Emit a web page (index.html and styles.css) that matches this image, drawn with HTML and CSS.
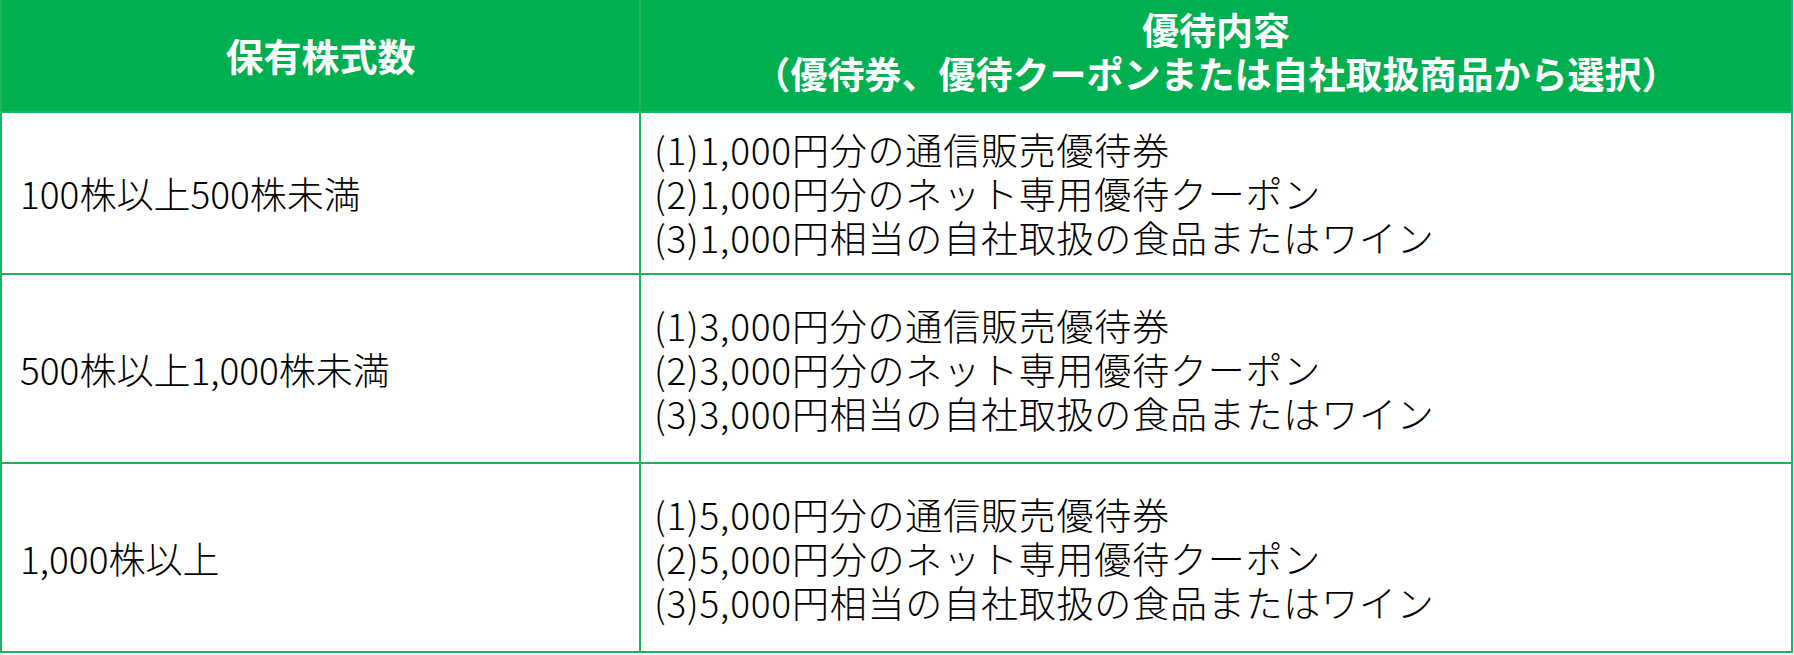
FILE: index.html
```html
<!DOCTYPE html>
<html lang="ja">
<head>
<meta charset="utf-8">
<title>株主優待</title>
<link rel="stylesheet" href="styles.css">
</head>
<body>
<table class="benefits">
  <thead>
    <tr>
      <th class="col-shares">保有株式数</th>
      <th class="col-content">優待内容<br>（優待券、優待クーポンまたは自社取扱商品から選択）</th>
    </tr>
  </thead>
  <tbody>
    <tr class="row-1">
      <td class="shares">100株以上500株未満</td>
      <td class="content">(1)1,000円分の通信販売優待券<br>(2)1,000円分のネット専用優待クーポン<br>(3)1,000円相当の自社取扱の食品またはワイン</td>
    </tr>
    <tr class="row-n">
      <td class="shares">500株以上1,000株未満</td>
      <td class="content">(1)3,000円分の通信販売優待券<br>(2)3,000円分のネット専用優待クーポン<br>(3)3,000円相当の自社取扱の食品またはワイン</td>
    </tr>
    <tr class="row-n">
      <td class="shares">1,000株以上</td>
      <td class="content">(1)5,000円分の通信販売優待券<br>(2)5,000円分のネット専用優待クーポン<br>(3)5,000円相当の自社取扱の食品またはワイン</td>
    </tr>
  </tbody>
</table>
</body>
</html>
```
FILE: styles.css
```css
html, body {
  margin: 0;
  padding: 0;
  background: #ffffff;
}
body {
  font-family: "Noto Sans CJK JP", "Noto Sans", sans-serif;
  color: #000;
}
.benefits {
  border-collapse: collapse;
  width: 1793px;
  table-layout: fixed;
}
.benefits th,
.benefits td {
  border: 2px solid #1db45c;
  vertical-align: middle;
}
.col-shares { width: 637px; }
.benefits thead th {
  background: #00b050;
  color: #ffffff;
  font-weight: 700;
  font-size: 37px;
  line-height: 44px;
  height: 101px;
  padding: 0 0 10px;
  text-align: center;
  border-top: none;
}
.benefits thead th.col-shares {
  padding: 4px 0 6px;
  font-size: 38px;
}
.shares {
  font-size: 37px;
  font-weight: 300;
  line-height: 44px;
  padding: 0 0 0 18px;
}
.content {
  font-size: 37px;
  font-weight: 300;
  line-height: 44px;
  letter-spacing: 0.8px;
  padding: 0 0 0 13px;
}
.row-1 td { height: 160px; }
.row-n td { height: 187px; }
```
